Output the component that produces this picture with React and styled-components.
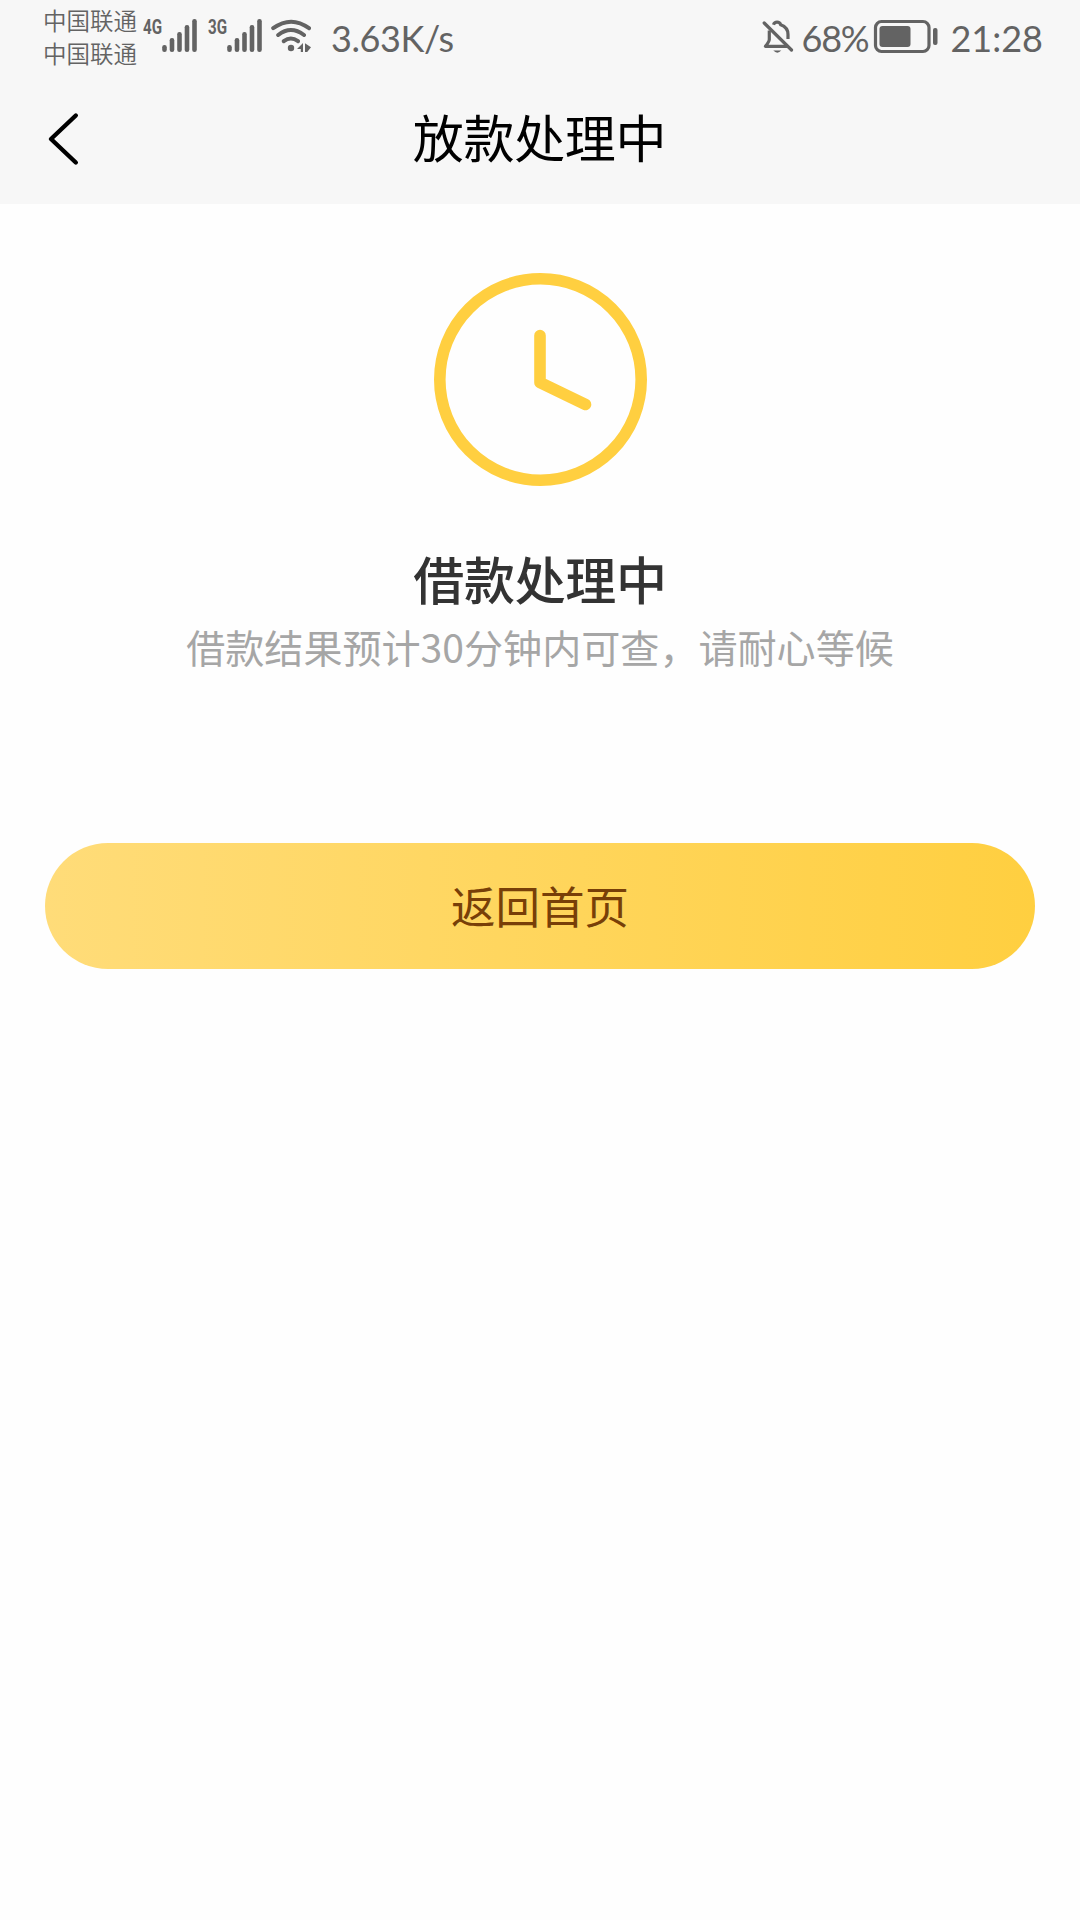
import React from 'react';
import styled, { createGlobalStyle } from 'styled-components';

const GlobalStyle = createGlobalStyle`
  *, *::before, *::after { box-sizing: border-box; }
  body {
    margin: 0;
    background: #fff;
    font-family: 'Noto Sans CJK SC', sans-serif;
  }
  svg { display: block; flex: none; }
`;

const Screen = styled.div`
  width: 1080px;
  height: 1920px;
  overflow: hidden;
  background: #fefefe;
`;

const Header = styled.header`
  height: 204px;
  background: #f7f7f7;
`;

const StatusBar = styled.div`
  display: flex;
  justify-content: space-between;
  height: 76px;
  padding: 0 37px 0 43px;
  color: #636363;
`;

const StatusGroup = styled.div`
  display: flex;
  align-items: flex-start;
`;

const Carriers = styled.div`
  width: 100px;
  padding-top: 4px;
  font-size: 23.5px;
  line-height: 32.5px;
  font-weight: 350;
  white-space: nowrap;
`;

const Signal = styled.div`
  display: flex;
  align-items: flex-start;
  width: 65px;
  padding-top: 18px;
`;

const Network = styled.span`
  width: 18px;
  font: 700 20.5px/19px 'Roboto', sans-serif;
`;

const NetworkLabel = styled.span`
  display: inline-block;
  transform: scaleX(0.74);
  transform-origin: left center;
`;

const StatusText = styled.span`
  margin-left: ${(p) => p.$left || 0}px;
  padding-top: 16px;
  font-family: 'Lato', sans-serif;
  font-size: 36px;
  line-height: 44px;
  letter-spacing: ${(p) => p.$spacing || 0}px;
  white-space: nowrap;
`;

const StatusIcon = styled.svg`
  margin-top: ${(p) => p.$top}px;
  margin-left: ${(p) => p.$left || 0}px;
`;

const NavBar = styled.nav`
  display: grid;
  grid-template-columns: 120px 1fr 120px;
  align-items: center;
  height: 124px;
`;

const BackButton = styled.button`
  height: 100%;
  padding: 1px 0 0 47px;
  border: 0;
  background: none;
`;

const Title = styled.h1`
  margin: 0 0 5px;
  text-align: center;
  font-size: 51px;
  line-height: 74px;
  font-weight: 400;
  letter-spacing: -0.3px;
  text-indent: -1px;
  color: #000;
`;

const Main = styled.main`
  display: flex;
  flex-direction: column;
  align-items: center;
  padding: 68px 45px 0;
`;

const Status = styled.h2`
  margin: 54px 0 0;
  font-size: 51px;
  line-height: 74px;
  font-weight: 500;
  letter-spacing: -0.3px;
  color: #333;
`;

const Description = styled.p`
  margin: 2px 0 0;
  font-size: 39.1px;
  line-height: 58px;
  color: #a6a6a6;
  white-space: nowrap;
`;

const HomeButton = styled.button`
  width: 990px;
  height: 126px;
  margin-top: 168px;
  padding: 0 0 3px;
  border: 0;
  border-radius: 63px;
  background: linear-gradient(90deg, #ffdc79, #ffcf40);
  color: #783f08;
  font-family: inherit;
  font-size: 44.5px;
`;

const barHeights = [7, 14, 20, 27, 33];

function SignalBars() {
  return (
    <svg width="38" height="34" viewBox="0 0 38 34" fill="#636363">
      {barHeights.map((h, i) => (
        <rect key={h} x={1.2 + i * 7.5} y={34 - h} width="4.6" height={h} rx="2.2" />
      ))}
    </svg>
  );
}

function SignalStrength({ label }) {
  return (
    <Signal>
      <Network><NetworkLabel>{label}</NetworkLabel></Network>
      <SignalBars />
    </Signal>
  );
}

function WifiIcon() {
  return (
    <StatusIcon $top={18} $left={-2} width="40" height="36" viewBox="0 0 40 36" fill="none" stroke="#636363" strokeWidth="4" strokeLinecap="round">
      <path d="M2.2 10.2Q20.2-2.8 38 10.2M7.2 17Q19.8 7 33 17M12.8 23.2Q19.8 17.8 27 23.2" />
      <circle cx="20" cy="30" r="3.2" fill="#636363" stroke="none" />
      <path d="M26 31L32 25V34H29.8V31ZM34 25.2L40 29.2L36.2 34H34Z" fill="#636363" stroke="none" />
    </StatusIcon>
  );
}

function MutedBellIcon() {
  return (
    <StatusIcon $top={19} width="32" height="36" viewBox="0 0 32 36" fill="none" stroke="#636363" strokeWidth="3.2">
      <path d="M2.2 4L29.5 31" strokeLinecap="round" />
      <path d="M11.5 5.8A3.8 3.8 0 0 1 18.7 5.8C23.5 7.5 26 10.5 26 15.5V20" />
      <path d="M7.3 11.5V20.5Q7.2 22.8 3.4 27.3H25" strokeLinejoin="round" />
      <path d="M11.3 31.5H19.3Q15.3 35.8 11.3 31.5Z" fill="#636363" stroke="none" />
    </StatusIcon>
  );
}

function BatteryIcon() {
  return (
    <StatusIcon $top={19} $left={5} width="66" height="36" viewBox="0 0 66 36" fill="#636363">
      <rect x="2.5" y="2.5" width="53.5" height="30" rx="6" fill="none" stroke="#636363" strokeWidth="3.2" />
      <rect x="6.5" y="7" width="31" height="21" rx="3" />
      <rect x="60" y="9" width="4.5" height="17" rx="2" />
    </StatusIcon>
  );
}

export default function App() {
  return (
    <Screen>
      <GlobalStyle />
      <Header>
        <StatusBar>
          <StatusGroup>
            <Carriers>
              <div>中国联通</div>
              <div>中国联通</div>
            </Carriers>
            <SignalStrength label="4G" />
            <SignalStrength label="3G" />
            <WifiIcon />
            <StatusText $left={20} $spacing={-0.4}>3.63K/s</StatusText>
          </StatusGroup>
          <StatusGroup>
            <MutedBellIcon />
            <StatusText $left={7} $spacing={-1.2}>68%</StatusText>
            <BatteryIcon />
            <StatusText $left={11}>21:28</StatusText>
          </StatusGroup>
        </StatusBar>
        <NavBar>
          <BackButton aria-label="返回">
            <svg width="32" height="54" viewBox="0 0 32 54" fill="none" stroke="#000" strokeWidth="4.4" strokeLinecap="round" strokeLinejoin="round">
              <path d="M28.8 3.5L4 27L28.8 50.5" />
            </svg>
          </BackButton>
          <Title>放款处理中</Title>
        </NavBar>
      </Header>
      <Main>
        <svg width="215" height="215" viewBox="0 0 215 215" fill="none" stroke="#ffcf40" strokeWidth="11.6" strokeLinecap="round" strokeLinejoin="round">
          <circle cx="107.5" cy="107.5" r="100.7" />
          <path d="M107 63.5V110.5L152.5 132.5" />
        </svg>
        <Status>借款处理中</Status>
        <Description>借款结果预计30分钟内可查，请耐心等候</Description>
        <HomeButton>返回首页</HomeButton>
      </Main>
    </Screen>
  );
}
